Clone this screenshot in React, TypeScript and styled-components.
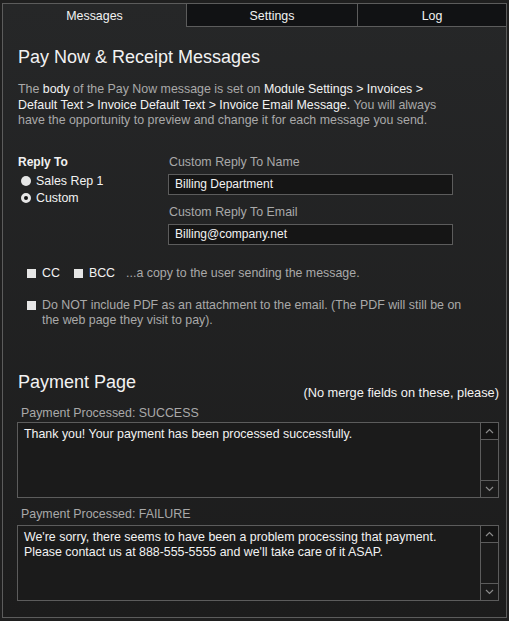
import React from "react"
import styled, { createGlobalStyle } from "styled-components"

const COLORS = {
  PAGE: "#1f1f1f",
  PANEL_TOP: "#262728",
  PANEL_BOTTOM: "#1c1c1c",
  BORDER: "#5c5c5c",
  TAB_DARK: "#111214",
  WHITE: "#f2f2f2",
  MUTED: "#a9a9a9",
  FIELD_BG: "#151515",
}

const GlobalStyle = createGlobalStyle`
  html, body {
    margin: 0;
    padding: 0;
    background: ${COLORS.PAGE};
  }
  body {
    font-family: "Liberation Sans", Arial, sans-serif;
    font-size: 12.4px;
    color: ${COLORS.WHITE};
  }
`

const Frame = styled.div`
  margin: 3px 2px 0 2px;
  width: 503px;
  height: 613px;
  border: 1px solid ${COLORS.BORDER};
  background: linear-gradient(${COLORS.PANEL_TOP}, ${COLORS.PANEL_BOTTOM});
  display: flex;
  flex-direction: column;
`

const TabBar = styled.div`
  display: flex;
  height: 23px;
`

const Tab = styled.div<{ $active?: boolean; $width: number }>`
  width: ${(p) => p.$width}px;
  flex: none;
  box-sizing: border-box;
  display: flex;
  align-items: center;
  justify-content: center;
  font-size: 12.4px;
  color: ${COLORS.WHITE};
  background: ${(p) => (p.$active ? "transparent" : COLORS.TAB_DARK)};
  border-left: ${(p) => (p.$active ? "none" : `1px solid ${COLORS.BORDER}`)};
  border-bottom: ${(p) => (p.$active ? "none" : `1px solid ${COLORS.BORDER}`)};
  padding-top: 1px;
`

const Content = styled.div`
  padding: 0 7px 0 15px;
  display: flex;
  flex-direction: column;
`

const Heading = styled.h2`
  margin: 19px 0 0 0;
  font-size: 18px;
  font-weight: normal;
  line-height: 22px;
  color: ${COLORS.WHITE};
`

const Intro = styled.p`
  margin: 14px 0 0 0;
  line-height: 15.5px;
  color: ${COLORS.MUTED};
  white-space: nowrap;

  b {
    font-weight: normal;
    color: ${COLORS.WHITE};
  }
`

const ReplyGrid = styled.div`
  display: grid;
  grid-template-columns: 150px 285px;
  margin-top: 26px;
`

const ReplyColumn = styled.div`
  display: flex;
  flex-direction: column;
`

const BoldLabel = styled.div`
  font-weight: bold;
  font-size: 12px;
  line-height: 14px;
  color: ${COLORS.WHITE};
  margin-bottom: 4px;
`

const RadioRow = styled.label`
  display: flex;
  align-items: center;
  gap: 5px;
  height: 17px;
  padding-left: 3px;
  color: ${COLORS.WHITE};
`

const RadioDot = styled.span<{ $checked?: boolean }>`
  width: 10px;
  height: 10px;
  border-radius: 50%;
  box-sizing: border-box;
  background: ${(p) => (p.$checked ? "#111" : "#e6e6e6")};
  border: ${(p) => (p.$checked ? "3px solid #e6e6e6" : "none")};
`

const FieldLabel = styled.div<{ $top?: number }>`
  margin-top: ${(p) => p.$top ?? 0}px;
  line-height: 14px;
  color: ${COLORS.MUTED};
  padding-left: 1px;
`

const TextInput = styled.div`
  margin-top: 5px;
  height: 21px;
  box-sizing: border-box;
  border: 1px solid ${COLORS.BORDER};
  background: ${COLORS.FIELD_BG};
  display: flex;
  align-items: center;
  padding-left: 6px;
  font-size: 12px;
  color: ${COLORS.WHITE};
`

const CheckRow = styled.div<{ $top: number }>`
  display: flex;
  align-items: flex-start;
  margin-top: ${(p) => p.$top}px;
  padding-left: 9px;
  line-height: 15px;
  color: ${COLORS.WHITE};
  white-space: nowrap;
`

const Box = styled.span`
  flex: none;
  width: 9px;
  height: 9px;
  background: #e6e6e6;
  margin: 3px 6px 0 0;
`

const CheckText = styled.span<{ $muted?: boolean; $gap?: number }>`
  color: ${(p) => (p.$muted ? COLORS.MUTED : COLORS.WHITE)};
  margin-right: ${(p) => p.$gap ?? 0}px;
`

const SectionHead = styled.div`
  margin-top: 43px;
  display: flex;
  flex-direction: column;
`

const SubHeading = styled.h3`
  margin: 0;
  font-size: 18px;
  font-weight: normal;
  line-height: 22px;
  color: ${COLORS.WHITE};
`

const Note = styled.div`
  align-self: flex-end;
  margin-top: -7px;
  font-size: 12.8px;
  line-height: 14px;
  color: ${COLORS.WHITE};
`

const AreaLabel = styled.div<{ $top: number }>`
  margin-top: ${(p) => p.$top}px;
  padding-left: 3px;
  line-height: 14px;
  color: ${COLORS.MUTED};
`

const AreaBox = styled.div<{ $top: number }>`
  margin: ${(p) => p.$top}px 0 0 -1px;
  height: 76px;
  box-sizing: border-box;
  border: 1px solid ${COLORS.BORDER};
  background: #1b1b1b;
  display: flex;
`

const AreaText = styled.div`
  flex: 1;
  padding: 4px 6px;
  line-height: 15px;
  color: ${COLORS.WHITE};
`

const ScrollBar = styled.div`
  width: 17px;
  border-left: 1px solid ${COLORS.BORDER};
  display: flex;
  flex-direction: column;
  justify-content: space-between;
`

const ScrollButton = styled.div<{ $top?: boolean }>`
  height: 16px;
  display: flex;
  align-items: center;
  justify-content: center;
  background: ${(p) => (p.$top ? "#141414" : "transparent")};
  border-bottom: ${(p) => (p.$top ? `1px solid ${COLORS.BORDER}` : "none")};
  border-top: ${(p) => (p.$top ? "none" : `1px solid ${COLORS.BORDER}`)};
`

const Chevron = ({ up }: { up?: boolean }) => (
  <svg width="9" height="6" viewBox="0 0 9 6">
    <path
      d={up ? "M1 5 L4.5 1.5 L8 5" : "M1 1 L4.5 4.5 L8 1"}
      fill="none"
      stroke="#8a8a8a"
      strokeWidth="1.2"
    />
  </svg>
)

const TextArea: React.FC<{ lines: string[]; top: number }> = ({ lines, top }) => (
  <AreaBox $top={top}>
    <AreaText>
      {lines.map((l) => (
        <div key={l}>{l}</div>
      ))}
    </AreaText>
    <ScrollBar>
      <ScrollButton $top>
        <Chevron up />
      </ScrollButton>
      <ScrollButton>
        <Chevron />
      </ScrollButton>
    </ScrollBar>
  </AreaBox>
)

const App: React.FC = () => (
  <>
    <GlobalStyle />
    <Frame>
      <TabBar>
        <Tab $active $width={183}>Messages</Tab>
        <Tab $width={171}>Settings</Tab>
        <Tab $width={149}>Log</Tab>
      </TabBar>
      <Content>
        <Heading>Pay Now &amp; Receipt Messages</Heading>
        <Intro>
          The <b>body</b> of the Pay Now message is set on <b>Module Settings &gt; Invoices &gt;</b>
          <br />
          <b>Default Text &gt; Invoice Default Text &gt; Invoice Email Message.</b> You will always
          <br />
          have the opportunity to preview and change it for each message you send.
        </Intro>

        <ReplyGrid>
          <ReplyColumn>
            <BoldLabel>Reply To</BoldLabel>
            <RadioRow>
              <RadioDot />
              Sales Rep 1
            </RadioRow>
            <RadioRow>
              <RadioDot $checked />
              Custom
            </RadioRow>
          </ReplyColumn>
          <ReplyColumn>
            <FieldLabel>Custom Reply To Name</FieldLabel>
            <TextInput>Billing Department</TextInput>
            <FieldLabel $top={10}>Custom Reply To Email</FieldLabel>
            <TextInput>Billing@company.net</TextInput>
          </ReplyColumn>
        </ReplyGrid>

        <CheckRow $top={21}>
          <Box />
          <CheckText $gap={14}>CC</CheckText>
          <Box />
          <CheckText $gap={11}>BCC</CheckText>
          <CheckText $muted>...a copy to the user sending the message.</CheckText>
        </CheckRow>
        <CheckRow $top={17}>
          <Box />
          <CheckText $muted>
            Do NOT include PDF as an attachment to the email. (The PDF will still be on
            <br />
            the web page they visit to pay).
          </CheckText>
        </CheckRow>

        <SectionHead>
          <SubHeading>Payment Page</SubHeading>
          <Note>(No merge fields on these, please)</Note>
        </SectionHead>

        <AreaLabel $top={6}>Payment Processed: SUCCESS</AreaLabel>
        <TextArea top={2} lines={["Thank you! Your payment has been processed successfully."]} />

        <AreaLabel $top={9}>Payment Processed: FAILURE</AreaLabel>
        <TextArea
          top={4}
          lines={[
            "We're sorry, there seems to have been a problem processing that payment.",
            "Please contact us at 888-555-5555 and we'll take care of it ASAP.",
          ]}
        />
      </Content>
    </Frame>
  </>
)

export default App
